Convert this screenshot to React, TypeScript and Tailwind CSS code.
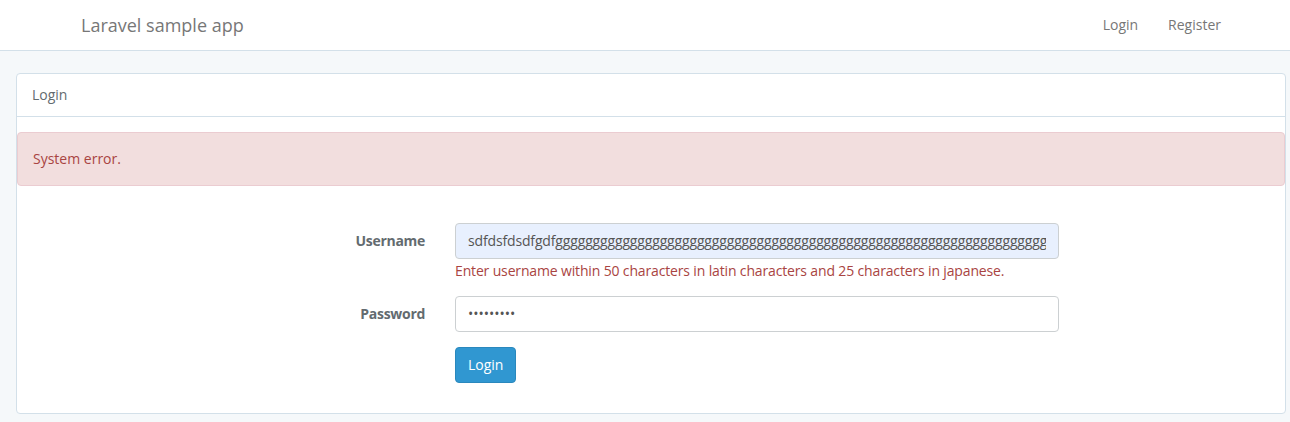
import React from "react";

export default function App() {
  const font = { fontFamily: '"Open Sans", "Liberation Sans", sans-serif' };
  return (
    <div className="min-h-[422px] w-[1290px] bg-[#f5f8fa] text-[14px] leading-[1.6] text-[#636b6f]" style={font}>
      <nav className="h-[51px] border-b border-[#d3e0e9] bg-white">
        <div className="flex h-[50px] items-center justify-between pl-[81px] pr-[69px]">
          <span className="text-[18px] text-[#777]">Laravel sample app</span>
          <div className="flex gap-[30px] text-[#777]">
            <span>Login</span>
            <span>Register</span>
          </div>
        </div>
      </nav>
      <div className="ml-[16px] mt-[22px] w-[1270px] rounded-[4px] border border-[#d3e0e9] bg-white">
        <div className="h-[43px] border-b border-[#d3e0e9] px-[15px] py-[10px] leading-[22px] text-[#636b6f]">Login</div>
        <div className="pt-[15px] pb-[30px]">
          <div className="rounded-[4px] border border-[#ebccd1] bg-[#f2dede] p-[15px] leading-[22px] text-[#a94442]">
            System error.
          </div>
          <div className="mt-[37px] flex flex-col">
            <div className="flex">
              <label className="w-[423px] pr-[15px] pt-[7px] text-right font-bold leading-[22px] tracking-[-0.3px] text-[#636b6f]">Username</label>
              <div className="ml-[15px] w-[604px]">
                <div className="h-[36px] rounded-[4px] border border-[#ccd0d2] bg-[#e8f0fe] px-[12px] py-[6px] leading-[22px] text-[#555]">
                  <div className="overflow-hidden whitespace-nowrap tracking-[-0.15px]">
                    sdfdsfdsdfgdfgggggggggggggggggggggggggggggggggggggggggggggggggggggggggggggggggggggggg
                  </div>
                </div>
                <div className="mt-[1px] mb-[14px] leading-[22px] tracking-[-0.15px] text-[#a94442]">
                  Enter username within 50 characters in latin characters and 25 characters in japanese.
                </div>
              </div>
            </div>
            <div className="flex">
              <label className="w-[423px] pr-[15px] pt-[7px] text-right font-bold leading-[22px] tracking-[-0.3px] text-[#636b6f]">Password</label>
              <div className="ml-[15px] w-[604px]">
                <div className="h-[36px] rounded-[4px] border border-[#ccd0d2] bg-white px-[12px] py-[6px] leading-[22px] text-[#555]">
                  •••••••••
                </div>
              </div>
            </div>
            <div className="mt-[15px] flex">
              <div className="ml-[438px]">
                <button className="h-[36px] rounded-[4px] border border-[#2a88bd] bg-[#3097d1] px-[12px] leading-[22px] text-white">
                  Login
                </button>
              </div>
            </div>
          </div>
        </div>
      </div>
    </div>
  );
}
